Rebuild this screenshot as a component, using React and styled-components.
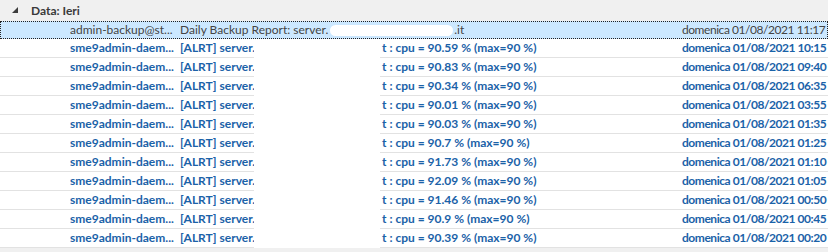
import React from "react";
import styled, { createGlobalStyle } from "styled-components";

const GlobalStyle = createGlobalStyle`
  html, body {
    margin: 0;
    padding: 0;
    background: #f0f0f0;
  }
  body {
    font-family: Lato, "Noto Sans", sans-serif;
    font-size: 12px;
  }
`;

const rows = [
  { time: "10:15", cpu: "90.59" },
  { time: "09:40", cpu: "90.83" },
  { time: "06:35", cpu: "90.34" },
  { time: "03:55", cpu: "90.01" },
  { time: "01:35", cpu: "90.03" },
  { time: "01:25", cpu: "90.7" },
  { time: "01:10", cpu: "91.73" },
  { time: "01:05", cpu: "92.09" },
  { time: "00:50", cpu: "91.46" },
  { time: "00:45", cpu: "90.9" },
  { time: "00:20", cpu: "90.39" },
];

export default function App() {
  return (
    <>
      <GlobalStyle />
      <List>
        <GroupHeader>
          <svg width="6" height="6" viewBox="0 0 6 6">
            <path d="M6 0 L6 6 L0 6 Z" fill="#3c3c3c" />
          </svg>
          <GroupLabel>Data: Ieri</GroupLabel>
        </GroupHeader>
        <Row selected>
          <Sender>admin-backup@st...</Sender>
          <Subject>
            Daily Backup Report: server.
            <Blot />
            .it
          </Subject>
          <When>domenica 01/08/2021 11:17</When>
        </Row>
        {rows.map(r => (
          <Row key={r.time} unread>
            <Sender>sme9admin-daem...</Sender>
            <Subject>
              <Prefix>[ALRT] server.</Prefix>
              <span>t : cpu = {r.cpu} % (max=90 %)</span>
            </Subject>
            <When>domenica 01/08/2021 {r.time}</When>
          </Row>
        ))}
        <Redaction />
      </List>
    </>
  );
}

const List = styled.div`
  position: relative;
  width: 828px;
`;

const GroupHeader = styled.div`
  height: 21px;
  display: flex;
  align-items: center;
  gap: 13px;
  padding-left: 12px;
  box-sizing: border-box;
  background: #f0f0f0;
  svg {
    margin-top: -1px;
  }
`;

const GroupLabel = styled.span`
  font-weight: 700;
  color: #3a3a3a;
`;

const Row = styled.div`
  display: grid;
  grid-template-columns: 110px 502px 1fr;
  align-items: center;
  box-sizing: border-box;
  height: ${p => (p.selected ? "18px" : "19px")};
  background: ${p => (p.selected ? "#cce8ff" : "#fff")};
  border: ${p => (p.selected ? "1px dotted #222" : "none")};
  border-bottom: ${p => (p.selected ? "1px dotted #222" : "1px solid #e2e2e2")};
  padding-left: ${p => (p.selected ? "69px" : "70px")};
  color: ${p => (p.unread ? "#1b62a8" : "#444")};
  font-weight: ${p => (p.unread ? 700 : 400)};
  white-space: nowrap;
  line-height: 16px;
`;

const Sender = styled.span`
  overflow: hidden;
`;

const Subject = styled.span`
  display: flex;
  align-items: center;
  overflow: hidden;
`;

const Prefix = styled.span`
  width: 202px;
  flex: none;
`;

const Blot = styled.span`
  display: inline-block;
  width: 123px;
  height: 11px;
  margin: 0 1px 0 2px;
  background: #fff;
  border-radius: 6px;
`;

const When = styled.span`
  letter-spacing: -0.45px;
`;

const Redaction = styled.div`
  position: absolute;
  left: 254px;
  top: 39px;
  width: 126px;
  height: 209px;
  background: #fff;
`;
